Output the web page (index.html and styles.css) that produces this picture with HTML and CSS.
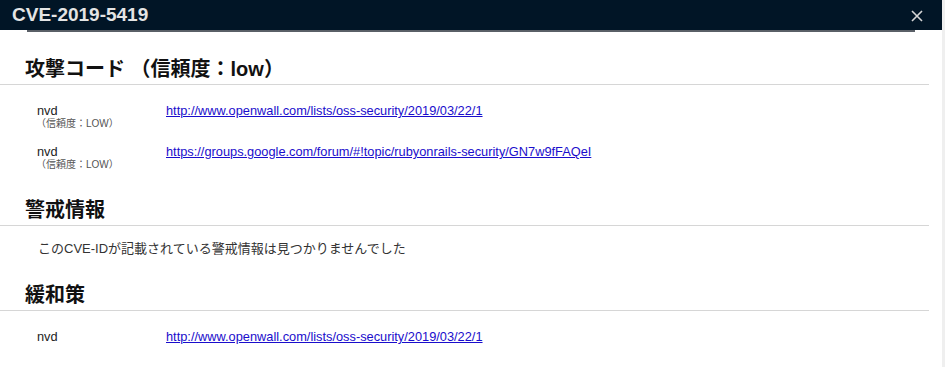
FILE: index.html
```html
<!DOCTYPE html>
<html>
<head>
	<title>CVE-2019-5419</title>
	<link rel="stylesheet" href="styles.css">
</head>
<body>
	<div class="page">
		<div class="modal">
			<div class="modal-header">
				<span class="modal-title">CVE-2019-5419</span>
				<span class="close">
					<svg width="12" height="12" viewBox="0 0 12 12"><path d="M1 1 L11 11 M11 1 L1 11" stroke="#d6d6d6" stroke-width="1.6" fill="none"/></svg>
				</span>
			</div>
			<div class="header-shade"></div>

			<h2 class="section-title first">攻撃コード （信頼度：low）</h2>
			<div class="ref-row">
				<div class="source">nvd<span class="trust">（信頼度：LOW）</span></div>
				<a href="#">http://www.openwall.com/lists/oss-security/2019/03/22/1</a>
			</div>
			<div class="ref-row">
				<div class="source">nvd<span class="trust">（信頼度：LOW）</span></div>
				<a href="#">https://groups.google.com/forum/#!topic/rubyonrails-security/GN7w9fFAQeI</a>
			</div>

			<h2 class="section-title">警戒情報</h2>
			<p class="empty">このCVE-IDが記載されている警戒情報は見つかりませんでした</p>

			<h2 class="section-title">緩和策</h2>
			<div class="ref-row">
				<div class="source">nvd</div>
				<a href="#">http://www.openwall.com/lists/oss-security/2019/03/22/1</a>
			</div>
		</div>
		<div class="scrollbar"></div>
	</div>
</body>
</html>
```

FILE: styles.css
```css
body{
	margin: 0;
	background: #fff;
	font-family: "Liberation Sans", "Noto Sans CJK JP", sans-serif;
	color: #222;
}

.page {
	display: flex;
	height: 367px;
	overflow: hidden;
}

.modal {
	width: 942px;
}

.scrollbar {
	width: 3px;
	background: #efefef;
}

.modal-header {
	height: 30px;
	background: #011526;
	display: flex;
	align-items: center;
	justify-content: space-between;
	padding: 0 19px 0 12px;
}

.modal-title {
	color: #e4e4e4;
	font-size: 19px;
	font-weight: bold;
}

.close {
	display: flex;
	margin-top: 2px;
}

.header-shade {
	height: 2px;
	margin: 0 27px 0 27px;
	background: #5a6067;
}

.section-title {
	margin: 27px 13px 0 0;
	padding: 0 0 3px 25px;
	font-size: 20px;
	line-height: 24px;
	color: #111;
	border-bottom: 1px solid #d6d6d6;
}

.section-title.first {
	margin-top: 25px;
}

.ref-row {
	display: grid;
	grid-template-columns: 129px auto;
	padding-left: 37px;
	margin-top: 18px;
	font-size: 12.8px;
	line-height: 15px;
}

.ref-row + .ref-row {
	margin-top: 14px;
}

.source {
	display: flex;
	flex-direction: column;
}

.trust {
	font-size: 10px;
	line-height: 12px;
	color: #555;
	margin-left: -1px;
}

.ref-row a {
	color: #1a0dcc;
}

.empty {
	margin: 15px 0 0 38px;
	font-size: 13px;
	line-height: 15px;
	color: #333;
}
```
